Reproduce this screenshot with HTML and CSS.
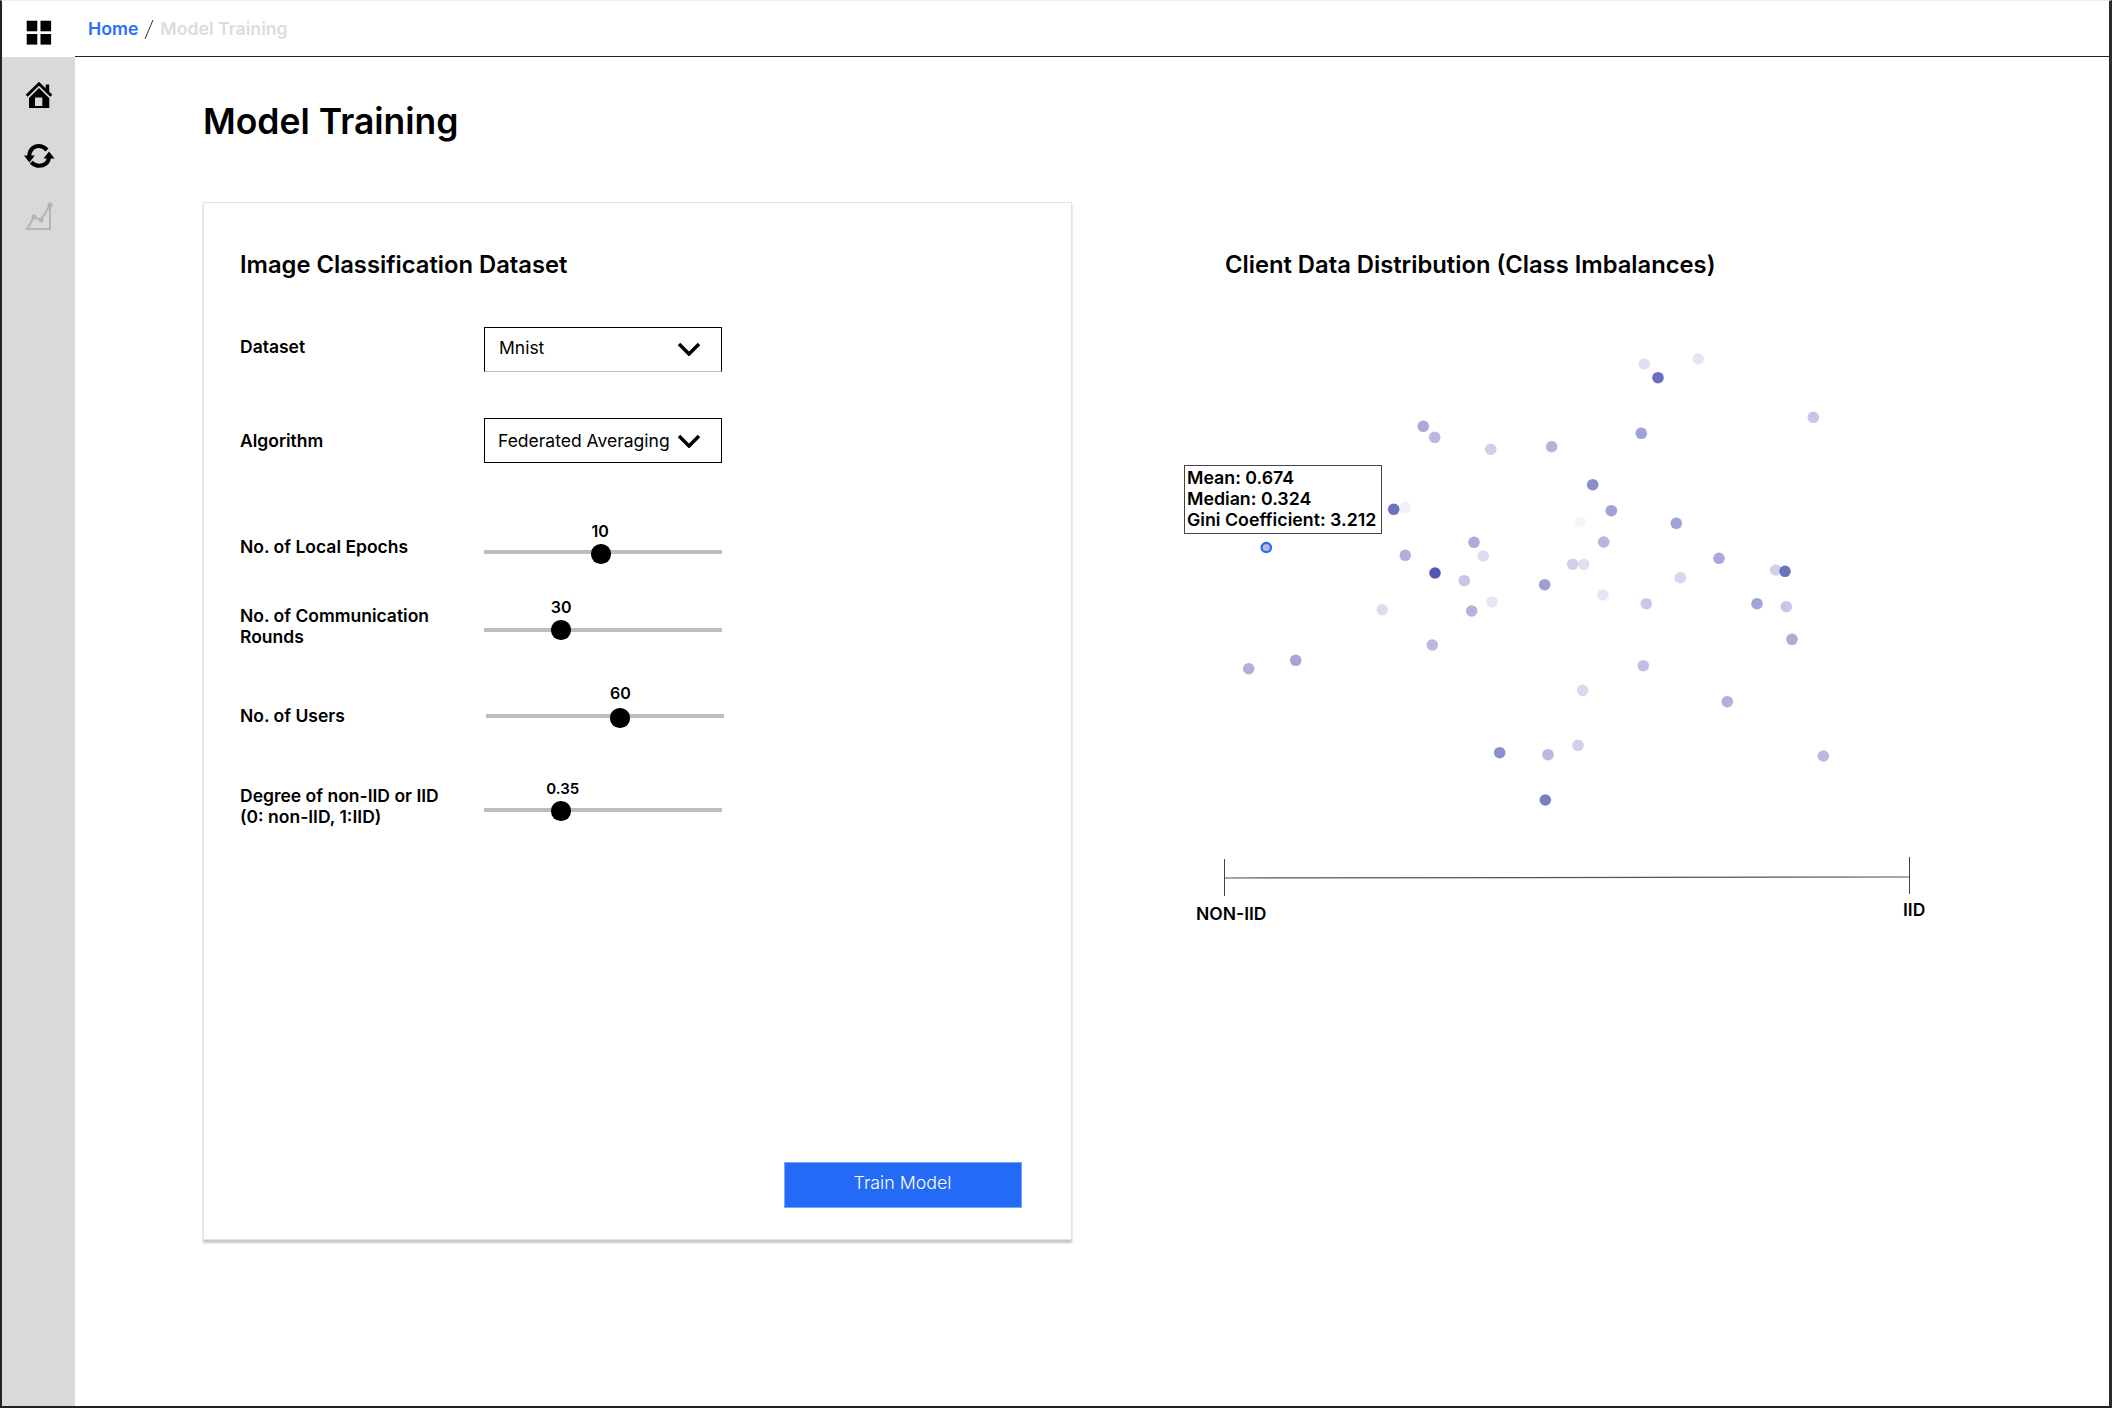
FILE: index.html
```html
<!DOCTYPE html>
<html lang="en">
<head>
    <meta charset="UTF-8">
    <title>Model Training</title>
    <link rel="stylesheet" href="styles.css">
</head>
<body>
    <div class="frame">
        <aside class="sidebar">
            <div class="side-logo">
                <svg class="icon" viewBox="0 0 32 32">
                    <rect x="3.7" y="4.7" width="10.6" height="10.6"/>
                    <rect x="17.5" y="4.7" width="10.6" height="10.6"/>
                    <rect x="3.7" y="18" width="10.6" height="10.6"/>
                    <rect x="17.5" y="18" width="10.6" height="10.6"/>
                </svg>
            </div>
            <nav class="side-nav">
                <svg class="icon" viewBox="0 0 32 32">
                    <path d="M22.700 5.500h3.500v8l-3.500-3z"/>
                    <path d="M6 19 16 9l10.300 10.300V29H6z"/>
                    <rect x="12" y="18.500" width="7.300" height="8.500" fill="#d9d9d9"/>
                    <path d="M3.700 16.800 16 4.800l12.300 12" fill="none" stroke="#000" stroke-width="3"/>
                </svg>
                <svg class="icon" viewBox="0 0 32 32">
                    <path d="M6.200 16C6.500 9.500 11 6 15.800 6c3.200 0 5.700 1.400 8.200 4" fill="none" stroke="#000" stroke-width="4"/>
                    <path d="M26 17.500c-.5 5.200-4.800 8.300-9.700 8.300-3.200 0-5.700-1.200-8.200-3.600" fill="none" stroke="#000" stroke-width="4"/>
                    <path d="M1 15.500h10.800L6.400 22.500z"/>
                    <path d="M20.500 18.500h11l-5.500-7z"/>
                </svg>
                <svg class="icon" viewBox="0 0 32 32">
                    <path d="M4 28 11 16l7 3 9-15v24z" fill="none" stroke="#b4b4b4" stroke-width="2"/>
                    <circle cx="11" cy="16" r="2.500" fill="#b4b4b4"/>
                    <circle cx="18" cy="19" r="2.500" fill="#b4b4b4"/>
                    <circle cx="27" cy="4" r="2.500" fill="#b4b4b4"/>
                </svg>
            </nav>
        </aside>

        <div class="content">
            <header class="topbar">
                <a class="crumb-home">Home</a>
                <svg class="crumb-sep" viewBox="0 0 10 20"><path d="M1 20 9 1" stroke="#333" fill="none"/></svg>
                <span class="crumb-page">Model Training</span>
            </header>

            <main class="main">
                <h1 class="page-title">Model Training</h1>

                <div class="columns">
                    <section class="card">
                        <h2 class="section-title">Image Classification Dataset</h2>

                        <div class="row row-dataset">
                            <div class="label">Dataset</div>
                            <div class="select select-open">
                                <span>Mnist</span>
                                <svg class="chevron" viewBox="0 0 24 14"><path d="M2 2l10 10L22 2"/></svg>
                            </div>
                        </div>

                        <div class="row row-algorithm">
                            <div class="label">Algorithm</div>
                            <div class="select">
                                <span>Federated Averaging</span>
                                <svg class="chevron" viewBox="0 0 24 14"><path d="M2 2l10 10L22 2"/></svg>
                            </div>
                        </div>

                        <div class="row row-epochs">
                            <div class="label">No. of Local Epochs</div>
                            <div class="slider">
                                <div class="slider-value" style="left: 48.800%">10</div>
                                <div class="slider-track"></div>
                                <div class="slider-thumb" style="left: 49.200%"></div>
                            </div>
                        </div>

                        <div class="row row-rounds">
                            <div class="label">No. of Communication<br>Rounds</div>
                            <div class="slider">
                                <div class="slider-value" style="left: 32.400%">30</div>
                                <div class="slider-track"></div>
                                <div class="slider-thumb" style="left: 32.400%"></div>
                            </div>
                        </div>

                        <div class="row row-users">
                            <div class="label">No. of Users</div>
                            <div class="slider">
                                <div class="slider-value" style="left: 56.500%">60</div>
                                <div class="slider-track"></div>
                                <div class="slider-thumb" style="left: 56.300%"></div>
                            </div>
                        </div>

                        <div class="row row-degree">
                            <div class="label">Degree of non-IID or IID<br>(0: non-IID, 1:IID)</div>
                            <div class="slider">
                                <div class="slider-value slider-value-small" style="left: 33.100%">0.35</div>
                                <div class="slider-track"></div>
                                <div class="slider-thumb" style="left: 32.400%"></div>
                            </div>
                        </div>

                        <button class="train-btn">Train Model</button>
                    </section>

                    <section class="chart-panel">
                        <h2 class="section-title chart-title">Client Data Distribution (Class Imbalances)</h2>

                        <div class="scatter">
                            <svg class="scatter-plot" viewBox="1180 340 740 600">
                                <g>
                                    <circle cx="1423.300" cy="426.300" r="5.800" fill="#a9a9d9"/>
                                    <circle cx="1434.700" cy="437.300" r="5.800" fill="#b8b8e0"/>
                                    <circle cx="1490.700" cy="449.300" r="5.800" fill="#cfcfe8"/>
                                    <circle cx="1551.700" cy="446.700" r="5.800" fill="#b3b3dc"/>
                                    <circle cx="1641.300" cy="433.300" r="5.800" fill="#a0a2d6"/>
                                    <circle cx="1644.300" cy="364" r="5.800" fill="#e0e0f0"/>
                                    <circle cx="1658" cy="377.700" r="5.800" fill="#6a6fc0"/>
                                    <circle cx="1592.700" cy="484.700" r="5.800" fill="#8a8dcc"/>
                                    <circle cx="1611.300" cy="510.700" r="5.800" fill="#a0a2d6"/>
                                    <circle cx="1580.300" cy="522" r="5.800" fill="#f6f6fa"/>
                                    <circle cx="1603.700" cy="542" r="5.800" fill="#b6b6de"/>
                                    <circle cx="1474" cy="542.300" r="5.800" fill="#acacda"/>
                                    <circle cx="1483.300" cy="556" r="5.800" fill="#dcdcee"/>
                                    <circle cx="1405.300" cy="555.300" r="5.800" fill="#b0b0dc"/>
                                    <circle cx="1435" cy="573" r="5.800" fill="#5458b4"/>
                                    <circle cx="1464.300" cy="580.700" r="5.800" fill="#c6c6e6"/>
                                    <circle cx="1572.700" cy="564.300" r="5.800" fill="#d0d0ea"/>
                                    <circle cx="1583.700" cy="564.300" r="5.800" fill="#e0e0f0"/>
                                    <circle cx="1544.700" cy="584.700" r="5.800" fill="#9c9fd4"/>
                                    <circle cx="1603" cy="595" r="5.800" fill="#e6e6f3"/>
                                    <circle cx="1646.300" cy="603.700" r="5.800" fill="#c8c8e6"/>
                                    <circle cx="1492" cy="602" r="5.800" fill="#e6e6f3"/>
                                    <circle cx="1471.700" cy="611" r="5.800" fill="#b2b2de"/>
                                    <circle cx="1382.300" cy="609.700" r="5.800" fill="#dcdcee"/>
                                    <circle cx="1432.300" cy="645" r="5.800" fill="#b8b8e0"/>
                                    <circle cx="1405.300" cy="507.300" r="5.800" fill="#f0f0f8"/>
                                    <circle cx="1393.700" cy="509.300" r="5.800" fill="#6e72c2"/>
                                    <circle cx="1698.300" cy="359" r="5.800" fill="#e4e4f2"/>
                                    <circle cx="1813.300" cy="417.300" r="5.800" fill="#c8c8e6"/>
                                    <circle cx="1676.300" cy="523.300" r="5.800" fill="#a0a2d6"/>
                                    <circle cx="1719" cy="558.300" r="5.800" fill="#a9a9d9"/>
                                    <circle cx="1775.700" cy="570" r="5.800" fill="#d0d0ea"/>
                                    <circle cx="1785" cy="571.300" r="5.800" fill="#6e72c2"/>
                                    <circle cx="1680.300" cy="577.700" r="5.800" fill="#d6d6ec"/>
                                    <circle cx="1757" cy="603.700" r="5.800" fill="#a2a4d8"/>
                                    <circle cx="1786.300" cy="606.700" r="5.800" fill="#c6c6e6"/>
                                    <circle cx="1792" cy="639.300" r="5.800" fill="#acacda"/>
                                    <circle cx="1643.300" cy="665.700" r="5.800" fill="#c0c0e2"/>
                                    <circle cx="1248.700" cy="668.700" r="5.800" fill="#b0b0dc"/>
                                    <circle cx="1295.700" cy="660.300" r="5.800" fill="#a4a4d6"/>
                                    <circle cx="1582.700" cy="690.300" r="5.800" fill="#d8d8ec"/>
                                    <circle cx="1499.700" cy="752.700" r="5.800" fill="#8c8fce"/>
                                    <circle cx="1548" cy="754.700" r="5.800" fill="#b8b8e0"/>
                                    <circle cx="1578" cy="745.300" r="5.800" fill="#d0d0ea"/>
                                    <circle cx="1545.300" cy="800" r="5.800" fill="#7a7dc8"/>
                                    <circle cx="1727.300" cy="701.700" r="5.800" fill="#b0b0dc"/>
                                    <circle cx="1823.300" cy="756" r="5.800" fill="#b8b8e0"/>
                                    <circle cx="1266.300" cy="547.500" r="4.700" fill="#b8b8e0" stroke="#236bf7" stroke-width="2.200"/>
                                </g>
                                <path d="M1224.500 859v37M1909.500 857v37" stroke="#444" fill="none"/>
                                <path d="M1225 878 1909 877" stroke="#555" stroke-width="1.200" fill="none"/>
                            </svg>

                            <div class="tooltip">Mean: 0.674<br>Median: 0.324<br>Gini Coefficient: 3.212</div>
                            <div class="axis-label axis-noniid">NON-IID</div>
                            <div class="axis-label axis-iid">IID</div>
                        </div>
                    </section>
                </div>
            </main>
        </div>
    </div>
</body>
</html>
```

FILE: styles.css
```css
* { margin: 0; padding: 0; box-sizing: border-box; }

body {
    font-family: Inter, "Liberation Sans", sans-serif;
    color: #000;
    background: #fff;
}

.frame {
    display: flex;
    width: 100%;
    height: 100vh;
    overflow: hidden;
    border-top: 1px solid #eee;
    border-left: 2px solid #222;
    border-right: 3px solid #2b2b2b;
    border-bottom: 2px solid #222;
}

.icon {
    display: block;
    width: 32px;
    height: 32px;
}

/* sidebar */
.sidebar {
    display: flex;
    flex-direction: column;
    width: 73px;
    flex-shrink: 0;
}

.side-logo {
    display: flex;
    justify-content: center;
    height: 56px;
    padding-top: 15px;
    padding-left: 1px;
}

.side-nav {
    flex: 1;
    display: flex;
    flex-direction: column;
    align-items: center;
    gap: 29px;
    padding-top: 22px;
    padding-left: 1px;
    background-color: #d9d9d9;
}

/* top bar */
.content { flex: 1; min-width: 0; }

.topbar {
    display: flex;
    align-items: center;
    height: 56px;
    padding-left: 13px;
    border-bottom: 1.5px solid #222;
    font-size: 17.700px;
    font-weight: 600;
}

.crumb-home { color: #2a6ff7; }

.crumb-sep {
    width: 10px;
    height: 20px;
    margin: 0 6px;
}

.crumb-page { color: #dcdcdc; }

/* main area */
.main { padding: 42px 0 0 128px; }

.page-title {
    font-size: 35.500px;
    font-weight: 600;
    line-height: 46px;
    margin-bottom: 57px;
}

.columns { display: flex; }

.card {
    display: flex;
    flex-direction: column;
    width: 869px;
    height: 1038px;
    padding: 47px 49.500px 31px 36px;
    border: 1px solid #e2e2e2;
    box-shadow: 0 3px 2px rgba(0, 0, 0, 0.22);
}

.section-title {
    font-size: 23.750px;
    font-weight: 600;
    line-height: 30px;
}

/* form rows */
.row {
    display: flex;
    align-items: flex-start;
}

.label {
    width: 244px;
    flex-shrink: 0;
    font-size: 17.500px;
    font-weight: 600;
    line-height: 21px;
}

.row-dataset { margin-top: 47px; }
.row-dataset .label { padding-top: 9px; }

.row-algorithm { margin-top: 46px; }
.row-algorithm .label { padding-top: 12px; }

.row-epochs { margin-top: 60px; }
.row-epochs .label { padding-top: 13px; }

.row-rounds { margin-top: 36px; }
.row-rounds .label { padding-top: 6px; }
.row-rounds .slider-track { top: 29px; }
.row-rounds .slider-thumb { top: 21px; }

.row-users { margin-top: 38px; }
.row-users .label { padding-top: 20px; }
.row-users .slider { margin-left: 2px; }
.row-users .slider-track { top: 29px; }
.row-users .slider-thumb { top: 23px; }

.row-degree { margin-top: 53px; }
.row-degree .label { padding-top: 6px; }
.row-degree .slider-track { top: 29px; }
.row-degree .slider-thumb { top: 22px; }

/* dropdowns */
.select {
    display: flex;
    align-items: center;
    justify-content: space-between;
    width: 238px;
    height: 45px;
    flex-shrink: 0;
    padding: 0 20px 0 13px;
    border: 1.5px solid #000;
    font-size: 17.500px;
    white-space: nowrap;
}

.select-open {
    padding-left: 14px;
    padding-bottom: 2px;
    border-bottom-color: #bdbdbd;
}

.select-open span { margin-bottom: 2px; }

.chevron {
    width: 24px;
    height: 14px;
    fill: none;
    stroke: #000;
    stroke-width: 3.500;
}

/* sliders */
.slider {
    position: relative;
    width: 238px;
    height: 40px;
    flex-shrink: 0;
}

.slider-value {
    position: absolute;
    top: -1px;
    transform: translateX(-50%);
    font-size: 16px;
    font-weight: 600;
    line-height: 18px;
}

.slider-value-small {
    top: 1px;
    font-size: 15px;
}

.slider-track {
    position: absolute;
    top: 27px;
    left: 0;
    width: 100%;
    height: 4px;
    background-color: #bdbdbd;
}

.slider-thumb {
    position: absolute;
    top: 21px;
    width: 19.500px;
    height: 19.500px;
    margin-left: -9.750px;
    border-radius: 50%;
    background-color: #000;
}

.train-btn {
    align-self: flex-end;
    width: 238px;
    height: 46px;
    margin-top: auto;
    padding-bottom: 5px;
    border: 1px solid #7aa6fa;
    background-color: #236bf7;
    color: #fff;
    font-family: inherit;
    font-size: 17.800px;
    font-weight: 300;
}

/* chart */
.chart-panel { flex: 1; padding-top: 48px; }

.chart-title { padding-left: 153px; }

.scatter {
    position: relative;
    width: 740px;
    height: 600px;
    margin-top: 60px;
    margin-left: 108px;
}

.scatter-plot {
    display: block;
    width: 740px;
    height: 600px;
}

.tooltip {
    position: absolute;
    left: 4px;
    top: 125px;
    width: 198px;
    height: 69px;
    padding: 1px 2px;
    border: 1px solid #444;
    background-color: #fff;
    font-size: 17.800px;
    font-weight: 600;
    line-height: 21px;
    white-space: nowrap;
}

.axis-label {
    position: absolute;
    font-size: 17.500px;
    font-weight: 600;
    line-height: 22px;
}

.axis-noniid { left: 16px; top: 563px; }
.axis-iid { left: 723px; top: 559px; }
```
